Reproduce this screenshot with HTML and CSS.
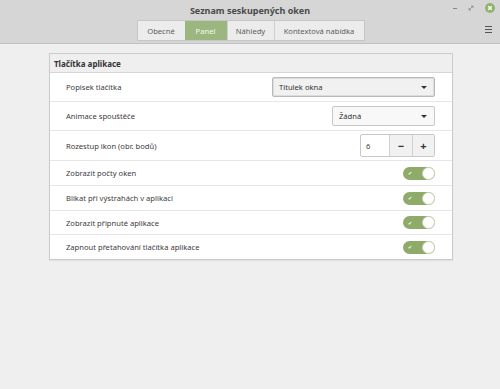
FILE: index.html
```html
<!DOCTYPE html>
<html lang="cs">
<head>
    <meta charset="UTF-8">
    <title>Seznam seskupených oken</title>
    <link rel="stylesheet" href="styles.css">
</head>
<body>
    <div class="header">
        <div class="titlebar">
            <h1>Seznam seskupených oken</h1>
            <div class="controls">
                <span class="ctl-min"></span>
                <svg class="ctl-max" width="6" height="6" viewBox="0 0 6 6"><path d="M1 5 L5 1 M3 1 H5 V3 M1 3 V5 H3" stroke="#888" stroke-width="0.8" fill="none"/></svg>
                <span class="ctl-close">
                    <svg width="10" height="10" viewBox="0 0 10 10"><circle cx="5" cy="5" r="5" fill="#8fb56c"/><path d="M3.3 3.3 L6.7 6.7 M6.7 3.3 L3.3 6.7" stroke="#fff" stroke-width="1.4"/></svg>
                </span>
            </div>
        </div>
        <div class="tabbar">
            <ul class="tabs">
                <li>Obecné</li>
                <li class="active">Panel</li>
                <li>Náhledy</li>
                <li>Kontextová nabídka</li>
            </ul>
            <div class="menu">
                <span></span><span></span><span></span>
            </div>
        </div>
    </div>
    <div class="content">
        <div class="frame">
            <div class="frame-title">Tlačítka aplikace</div>
            <div class="row tall">
                <span class="label">Popisek tlačítka</span>
                <div class="combo focused wide">Titulek okna<span class="arrow"></span></div>
            </div>
            <div class="row tall">
                <span class="label">Animace spouštěče</span>
                <div class="combo">Žádná<span class="arrow"></span></div>
            </div>
            <div class="row taller">
                <span class="label">Rozestup ikon (obr. bodů)</span>
                <div class="spin">
                    <span class="spin-value">6</span>
                    <span class="spin-btn">&minus;</span>
                    <span class="spin-btn">+</span>
                </div>
            </div>
            <div class="row">
                <span class="label">Zobrazit počty oken</span>
                <span class="switch"><span class="check">&#10004;</span><span class="knob"></span></span>
            </div>
            <div class="row">
                <span class="label">Blikat při výstrahách v aplikaci</span>
                <span class="switch"><span class="check">&#10004;</span><span class="knob"></span></span>
            </div>
            <div class="row short">
                <span class="label">Zobrazit připnuté aplikace</span>
                <span class="switch"><span class="check">&#10004;</span><span class="knob"></span></span>
            </div>
            <div class="row short">
                <span class="label">Zapnout přetahování tlačítka aplikace</span>
                <span class="switch"><span class="check">&#10004;</span><span class="knob"></span></span>
            </div>
        </div>
    </div>
</body>
</html>
```

FILE: styles.css
```css
* {
    margin: 0;
    padding: 0;
    box-sizing: border-box;
}

body {
    font-family: 'Noto Sans', sans-serif;
    background-color: #efefef;
    color: #3a3a3a;
    width: 500px;
    height: 389px;
    overflow: hidden;
}

.header {
    background-color: #d6d6d6;
    border-bottom: 1px solid #c2c2c2;
    height: 44px;
}

.titlebar {
    height: 19px;
    display: flex;
    align-items: center;
    justify-content: center;
    position: relative;
}

.titlebar h1 {
    font-size: 9px;
    font-weight: bold;
    color: #4a4a4a;
    padding-top: 2px;
}

.controls {
    position: absolute;
    right: 5px;
    top: 3px;
    display: flex;
    align-items: center;
    gap: 11px;
}

.ctl-min {
    width: 4px;
    height: 1px;
    background-color: #888;
}

.ctl-close svg {
    display: block;
}

.tabbar {
    height: 21px;
    display: flex;
    justify-content: center;
    position: relative;
    padding-top: 1px;
}

.tabs {
    display: flex;
    list-style-type: none;
    border: 1px solid #c6c6c6;
    background-color: #ececec;
    height: 21px;
    margin-left: 1px;
}

.tabs li {
    font-size: 7.6px;
    color: #5c5c5c;
    display: flex;
    align-items: center;
    justify-content: center;
    border-left: 1px solid #cfcfcf;
}

.tabs li:first-child {
    border-left: none;
    width: 47px;
}

.tabs li:nth-child(2) {
    width: 42px;
}

.tabs li:nth-child(3) {
    width: 47px;
}

.tabs li:nth-child(4) {
    width: 90px;
}

.tabs li.active {
    background-color: #9bb67f;
    color: #f4f7ee;
    border-left: none;
}

.menu {
    position: absolute;
    right: 8px;
    top: 7px;
    display: flex;
    flex-direction: column;
    gap: 2px;
}

.menu span {
    width: 7px;
    height: 1px;
    background-color: #555;
}

.content {
    padding: 9px 47px 0 49px;
}

.frame {
    background-color: #fff;
    border: 1px solid #cbcbcb;
    box-shadow: 0 1px 1px rgba(0, 0, 0, 0.06);
}

.frame-title {
    height: 19px;
    background-color: #efefef;
    border-bottom: 1px solid #d6d6d6;
    font-size: 8px;
    font-weight: bold;
    color: #333;
    display: flex;
    align-items: center;
    padding-left: 4px;
}

.row {
    height: 25px;
    display: flex;
    align-items: center;
    justify-content: space-between;
    padding: 0 17px 0 16px;
    border-bottom: 1px solid #e6e6e6;
}

.row:last-child {
    border-bottom: none;
}

.row.tall {
    height: 29px;
}

.row.taller {
    height: 30px;
}

.row.short {
    height: 24px;
}

.label {
    font-size: 7.6px;
    color: #3c3c3c;
}

.combo {
    position: relative;
    width: 103px;
    height: 20px;
    border: 1px solid #c8c8c8;
    border-radius: 2px;
    background-color: #f8f8f8;
    font-size: 7.6px;
    color: #333;
    display: flex;
    align-items: center;
    padding-left: 6px;
}

.combo.wide {
    width: 163px;
}

.combo.focused {
    border-color: #b9b9b9;
    background-color: #f1f1f1;
    box-shadow: inset 0 0 0 1px #dcdcdc;
}

.arrow {
    position: absolute;
    right: 7px;
    top: 8px;
    width: 0;
    height: 0;
    border-left: 3px solid transparent;
    border-right: 3px solid transparent;
    border-top: 3px solid #333;
}

.spin {
    display: flex;
    height: 23px;
    border: 1px solid #c8c8c8;
    border-radius: 2px;
    background-color: #fff;
}

.spin-value {
    width: 28px;
    font-size: 7.6px;
    display: flex;
    align-items: center;
    padding-left: 5px;
    color: #444;
}

.spin-btn {
    width: 23px;
    border-left: 1px solid #d0d0d0;
    background-color: #f1f1f1;
    display: flex;
    align-items: center;
    justify-content: center;
    font-size: 11px;
    font-weight: bold;
    color: #333;
}

.spin-btn:last-child {
    width: 22px;
}

.switch {
    position: relative;
    width: 32px;
    height: 13px;
    border-radius: 7px;
    background-color: #8eab69;
    display: flex;
    align-items: center;
}

.check {
    font-size: 5px;
    color: #fff;
    padding-left: 5px;
}

.knob {
    position: absolute;
    right: 0;
    top: 0;
    width: 13px;
    height: 13px;
    border-radius: 50%;
    background-color: #fff;
    border: 1px solid #c9d6b8;
}
```
